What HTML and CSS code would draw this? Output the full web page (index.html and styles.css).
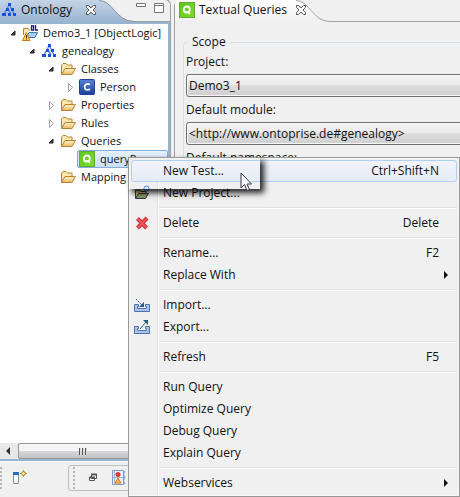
FILE: index.html
```html
<!DOCTYPE html>
<html lang="en">
<head>
<meta charset="utf-8">
<title>Ontology workbench</title>
<link rel="stylesheet" href="styles.css">
</head>
<body>
<svg class="defs" aria-hidden="true">
  <defs>
    <linearGradient id="gold" x1="0" y1="0" x2="0" y2="1"><stop offset="0" stop-color="#fff3cf"/><stop offset="1" stop-color="#e9b75c"/></linearGradient>
    <linearGradient id="green" x1="0" y1="0" x2="1" y2="1"><stop offset="0" stop-color="#5cc51c"/><stop offset="1" stop-color="#7ee02a"/></linearGradient>
    <linearGradient id="blue" x1="0" y1="0" x2="0" y2="1"><stop offset="0" stop-color="#5a82d8"/><stop offset="1" stop-color="#1c3f9c"/></linearGradient>
    <linearGradient id="tabblue" x1="0" y1="0" x2="0" y2="1"><stop offset="0" stop-color="#c4d4e6"/><stop offset="1" stop-color="#99b4d1"/></linearGradient>
    <linearGradient id="tabgrey" x1="0" y1="0" x2="0" y2="1"><stop offset="0" stop-color="#ffffff"/><stop offset="1" stop-color="#f0f0f0"/></linearGradient>
    <symbol id="i-onto" viewBox="0 0 16 16"><path d="M8 3 3 12M7 7l3 5M9 4l4 8" stroke="#5c86e6" stroke-width="1.500" fill="none"/><path d="M7 1h3v3H7zM5 6h3v3H5zM10 6h3v3h-3zM1 11h4v3H1zM7 11h3v3H7zM12 11h3v3h-3z" fill="#1c50d8"/></symbol>
    <symbol id="i-folder" viewBox="0 0 16 16"><path d="M1.500 13V4l1.500-1.500h3L7.500 4H12v3" fill="#fbe5b0" stroke="#b9822f"/><path d="M1.500 13.500 5 7.500h10.500l-3.500 6z" fill="url(#gold)" stroke="#b9822f"/></symbol>
    <symbol id="i-query" viewBox="0 0 16 16"><rect x=".5" y=".5" width="15" height="15" fill="url(#green)" stroke="#62a936"/><circle cx="7.800" cy="7.500" r="3" fill="none" stroke="#fff" stroke-width="1.800"/><path d="m8.500 9.500 2.500 2.500" stroke="#fff" stroke-width="1.500"/></symbol>
    <symbol id="i-class" viewBox="0 0 16 16"><rect x=".5" y=".5" width="15" height="15" rx="1" fill="url(#blue)" stroke="#1e3e91"/><path d="M10.800 5.800A3 3 0 1 0 10.800 10" fill="none" stroke="#fff" stroke-width="1.800"/></symbol>
    <symbol id="i-open" viewBox="0 0 10 10"><path d="M7 3v4H3z" fill="#444" stroke="#222"/></symbol>
    <symbol id="i-shut" viewBox="0 0 10 10"><path d="M3.500 1.500 7.500 5.500l-4 4z" fill="#fff" stroke="#a3a3a3"/></symbol>
    <symbol id="i-close" viewBox="0 0 12 12"><path d="M1.500 1.500h2L6 4l2.500-2.500h2v2L8 6l2.500 2.500v2h-2L6 8l-2.500 2.500h-2v-2L4 6 1.500 3.500z" fill="#fff" stroke="#555"/></symbol>
    <symbol id="i-tray" viewBox="0 0 16 16"><path d="M.5 7.500h4v2h-1v2h9v-2h-1v-2h4v7H.5z" fill="#a9c3ea" stroke="#4f73aa"/></symbol>
  </defs>
</svg>
<div class="workbench">
  <div class="views">
    <section class="ontology">
      <header class="tabs">
        <svg class="tab-shape" width="136" height="22" aria-hidden="true"><path d="M0 0h99c14 0 16 21 35 21v1H0z" fill="url(#tabblue)"/><path d="M99 .5c14 0 17 21 35 21h2" fill="none" stroke="#8d969f"/></svg>
        <div class="tab"><svg class="icon"><use href="#i-onto"/></svg><span class="tab-title">Ontology</span><button class="plain" aria-label="Close Ontology"><svg class="small"><use href="#i-close"/></svg></button></div>
        <div class="tab-tools">
          <button class="plain" aria-label="Minimize"><svg width="10" height="12"><path d="M.5 1.500h9v3h-9z" fill="#fff" stroke="#777"/></svg></button>
          <button class="plain" aria-label="Maximize"><svg width="10" height="12"><path d="M.5 1.500h9v9h-9zM0 3.500h10" fill="#fff" stroke="#777"/></svg></button>
        </div>
      </header>
      <div class="view-body">
        <ul class="tree">
          <li class="l0"><svg class="twist"><use href="#i-open"/></svg><svg class="icon" viewBox="0 0 16 16"><path d="M1.500 10V3.500h5l1 2" fill="#fbe5b0" stroke="#b9822f"/><path d="M4 12.500 7 7.500h8.500l-2.500 5z" fill="#a9cdf3" stroke="#3e7bb8"/><path d="M4.500 7.500 8 15.500H.5z" fill="#ffcf5a" stroke="#c47a16"/><path d="M4.500 10v3M4.500 13.500v1" stroke="#5a3000"/><path d="M9.500 1h2v4h-2zM13.500 0v5H16" fill="none" stroke="#1a1a80" stroke-width="1.300"/></svg><span>Demo3_1 [ObjectLogic]</span></li>
          <li class="l1"><svg class="twist"><use href="#i-open"/></svg><svg class="icon"><use href="#i-onto"/></svg><span>genealogy</span></li>
          <li class="l2"><svg class="twist"><use href="#i-open"/></svg><svg class="icon"><use href="#i-folder"/></svg><span>Classes</span></li>
          <li class="l3"><svg class="twist"><use href="#i-shut"/></svg><svg class="icon"><use href="#i-class"/></svg><span>Person</span></li>
          <li class="l2"><svg class="twist"><use href="#i-shut"/></svg><svg class="icon"><use href="#i-folder"/></svg><span>Properties</span></li>
          <li class="l2"><svg class="twist"><use href="#i-shut"/></svg><svg class="icon"><use href="#i-folder"/></svg><span>Rules</span></li>
          <li class="l2"><svg class="twist"><use href="#i-open"/></svg><svg class="icon"><use href="#i-folder"/></svg><span>Queries</span></li>
          <li class="l3 leaf"><span class="selected"><svg class="icon"><use href="#i-query"/></svg><span>queryP</span></span></li>
          <li class="l2"><svg class="twist"></svg><svg class="icon"><use href="#i-folder"/></svg><span>Mapping</span></li>
        </ul>
        <div class="scrollbar">
          <button class="plain arrow" aria-label="Scroll left"><svg width="6" height="8"><path d="M5 0v8L1 4z" fill="#333"/></svg></button>
          <div class="thumb"><i></i><i></i><i></i></div>
        </div>
      </div>
    </section>
    <section class="queries">
      <header class="tabs">
        <svg class="tab-shape" width="156" height="22" aria-hidden="true"><path d="M0 22V4Q0 0 4 0h117c14 0 16 21 34 21v1z" fill="url(#tabgrey)"/><path d="M121 .5c14 0 16 21 34 21h1" fill="none" stroke="#a0a0a0"/></svg>
        <div class="tab"><svg class="icon"><use href="#i-query"/></svg><span class="tab-title">Textual Queries</span><button class="plain" aria-label="Close Textual Queries"><svg class="small"><use href="#i-close"/></svg></button></div>
      </header>
      <fieldset>
        <legend>Scope</legend>
        <label for="project">Project:</label>
        <select id="project"><option>Demo3_1</option></select>
        <label for="module">Default module:</label>
        <select id="module"><option>&lt;http://www.ontoprise.de#genealogy&gt;</option></select>
        <label for="namespace">Default namespace:</label>
        <select id="namespace"><option></option></select>
      </fieldset>
    </section>
  </div>
  <footer class="status">
    <span class="grip"></span>
    <button class="plain" aria-label="New fast view"><svg width="16" height="16"><path d="M1.500 3.500h5v10h-5z" fill="#fff" stroke="#7b8fa5"/><path d="M1 2h6v3H1z" fill="#286fba"/><path d="m11.500.5 1 2 2 1-2 1-1 2-1-2-2-1 2-1z" fill="#ffe9a0" stroke="#a47b12"/></svg></button>
    <div class="trim">
      <span class="grip"></span>
      <button class="plain" aria-label="Restore"><svg width="10" height="10"><path d="M3.500 1.500h5v4h-5zM1.500 4.500h5v3h-5z" fill="#fff" stroke="#555"/><path d="M3 1.500h6M1 4.500h6" stroke="#555" stroke-width="2"/></svg></button>
      <button class="plain" aria-label="Problems view"><svg width="16" height="16"><path d="M1.500.5h11v14h-11z" fill="#e9eff8" stroke="#7e9cc4"/><path d="M14 1q-3 3 0 6-3 4 0 7" fill="none" stroke="#7e9cc4"/><circle cx="7" cy="4.500" r="2.500" fill="#e2323b"/><path d="m7 8 3 5H4z" fill="#ffc24b" stroke="#d57718"/><path d="M2 7.500h10M3.500 1v13" stroke="#9db4d5"/></svg></button>
    </div>
  </footer>
</div>

<div class="menu" role="menu">
  <button role="menuitem" class="item active"><span class="mi"></span><span class="name">New Test...</span><kbd>Ctrl+Shift+N</kbd></button>
  <button role="menuitem" class="item"><span class="mi"><svg class="icon" viewBox="0 0 16 16"><path d="M1.500 13V5h4l1 1.500H12V9" fill="#e6c56a" stroke="#3b3a2c"/><path d="m1.500 13.500 3-5h10l-3 5z" fill="#8c9b64" stroke="#2d3555"/><circle cx="12.500" cy="3.500" r="2.500" fill="#d9ecff" stroke="#3f87d2"/></svg></span><span class="name">New Project...</span></button>
  <hr>
  <button role="menuitem" class="item"><span class="mi"><svg class="icon" viewBox="0 0 16 16"><path d="m3.500 3.500 9 9.500M13 3 3.500 13" stroke="#c6282e" stroke-width="4"/><path d="m3.500 3.500 9 9.500M13 3 3.500 13" stroke="#f0555a" stroke-width="2.400"/></svg></span><span class="name">Delete</span><kbd>Delete</kbd></button>
  <hr>
  <button role="menuitem" class="item"><span class="mi"></span><span class="name">Rename...</span><kbd>F2</kbd></button>
  <button role="menuitem" class="item"><span class="mi"></span><span class="name">Replace With</span><svg class="sub" viewBox="0 0 4 8"><path d="m0 0 4 4-4 4z"/></svg></button>
  <hr>
  <button role="menuitem" class="item"><span class="mi"><svg class="icon" viewBox="0 0 16 16"><use href="#i-tray"/><path d="m2 2 6 6" stroke="#315f92" stroke-dasharray="2 1"/><path d="M10 5v5H5z" fill="#1b5c94"/></svg></span><span class="name">Import...</span></button>
  <button role="menuitem" class="item"><span class="mi"><svg class="icon" viewBox="0 0 16 16"><use href="#i-tray"/><path d="m6 10 6-7" stroke="#315f92"/><path d="M9 1h5v5z" fill="#1b5c94"/></svg></span><span class="name">Export...</span></button>
  <hr>
  <button role="menuitem" class="item"><span class="mi"></span><span class="name">Refresh</span><kbd>F5</kbd></button>
  <hr>
  <button role="menuitem" class="item"><span class="mi"></span><span class="name">Run Query</span></button>
  <button role="menuitem" class="item"><span class="mi"></span><span class="name">Optimize Query</span></button>
  <button role="menuitem" class="item"><span class="mi"></span><span class="name">Debug Query</span></button>
  <button role="menuitem" class="item"><span class="mi"></span><span class="name">Explain Query</span></button>
  <hr>
  <button role="menuitem" class="item"><span class="mi"></span><span class="name">Webservices</span><svg class="sub" viewBox="0 0 4 8"><path d="m0 0 4 4-4 4z"/></svg></button>
  <div class="callout"></div>
  <svg class="cursor" width="13" height="20" viewBox="0 0 13 20"><path d="M1 1v15l3.500-3.500L7 18.500l2.500-1L7 12h4.500z" fill="#fff" stroke="#33364a"/></svg>
</div>
</body>
</html>
```
FILE: styles.css
```css
* { box-sizing: border-box; }
body {
  margin: 0;
  height: 100vh;
  overflow: hidden;
  position: relative;
  background: #f0f0f0;
  color: #111;
  font: 12px/18px "Open Sans", "Noto Sans", sans-serif;
}
svg { display: block; flex: none; }
button, select { font: inherit; color: inherit; }
.defs { position: absolute; width: 0; height: 0; }
.icon { width: 16px; height: 16px; }
.small { width: 12px; height: 12px; }
.plain { display: block; padding: 0; border: 0; background: none; }

.workbench { height: 100%; display: flex; flex-direction: column; }
.views { flex: 1; min-height: 0; display: grid; grid-template-columns: 171px 1fr; gap: 3px; }
.ontology, .queries { display: flex; flex-direction: column; min-width: 0; }
.ontology { border-right: 1px solid #a0a0a0; border-radius: 0 6px 0 0; border-top: 1px solid #a0a0a0; margin-top: -1px; }
.queries { border-left: 1px solid #a0a0a0; border-radius: 6px 0 0 0; }

.tabs { height: 22px; flex: none; display: flex; justify-content: space-between; position: relative; border-bottom: 1px solid #a0a0a0; }
.tab-shape { position: absolute; left: 0; top: 0; }
.tab { position: relative; display: flex; align-items: center; height: 20px; }
.ontology .tab { padding-left: 1px; gap: 4px; }
.queries .tab { padding-left: 4px; gap: 4px; }
.ontology .tab-title { margin-right: 9px; }
.queries .tab-title { margin-right: 4px; }
.tab-tools { display: flex; gap: 8px; padding: 2px 6px 0 0; align-items: flex-start; }

.view-body { flex: 1; min-height: 0; display: flex; flex-direction: column; background: #fff; border: solid #99b4d1; border-width: 2px 2px 2px 0; }
.tree { flex: 1; min-height: 0; overflow: hidden; margin: 0; padding: 0; list-style: none; white-space: nowrap; font-size: 11px; }
.tree li { display: flex; align-items: center; height: 18px; }
.tree .icon { margin: 0 5px 0 4px; }
.twist { width: 10px; height: 10px; }
.l0 { padding-left: 8px; }
.l1 { padding-left: 27px; }
.l2 { padding-left: 46px; }
.l3 { padding-left: 65px; }
.tree .leaf { padding-left: 77px; }
.selected { flex: 1; display: flex; align-items: center; height: 18px; border: 1px solid #84acdd; border-radius: 2px; background: linear-gradient(#e6f0fc, #c9dffa); }
.tree .selected .icon { margin-left: 1px; }

.scrollbar { display: flex; height: 16px; flex: none; background: #e8e8e8; }
.arrow { width: 18px; padding: 0 5px; }
.thumb { flex: 1; display: flex; gap: 1px; align-items: center; justify-content: center; padding-right: 20px; border: 1px solid #979797; border-radius: 2px; background: linear-gradient(#f5f5f5 48%, #d8d8da 52%, #c2c2c6); }
.thumb i { width: 2px; height: 7px; background: #555; border-right: 1px solid #ddd; }

fieldset { margin: 11px -4px 0 8px; padding: 0 0 0 2px; min-width: 0; border: 1px solid #d5dfe5; border-radius: 4px; display: flex; flex-direction: column; }
legend { margin-left: 2px; padding: 0 4px; }
label { margin: 2px 0 3px; }
select { appearance: none; height: 23px; flex: none; width: 100%; padding: 0 2px; border: 1px solid #707070; border-radius: 3px; background: linear-gradient(#f2f2f2, #ebebeb 48%, #dddddd 50%, #cfcfcf); box-shadow: inset 0 0 0 1px #f8f8f8; margin-bottom: 2px; }

.status { flex: none; height: 36px; display: flex; align-items: center; gap: 10px; border-top: 1px solid #f8f8f8; padding-bottom: 4px; }
.grip { width: 1px; height: 22px; border-left: 2px dotted #b5b5b5; }
.trim { flex: 1; display: flex; align-items: center; gap: 13px; height: 26px; margin-left: 30px; padding-left: 4px; border: 1px solid #bcbcbc; border-radius: 3px; }

.menu { position: absolute; top: 157px; left: 128px; right: 0; padding: 2px; border: 1px solid #979797; background: linear-gradient(90deg, #f0f0f0 28px, #e0e0e0 28px 29px, #fff 29px 30px, #f0f0f0 30px); box-shadow: inset 0 0 0 1px #f6f6f6; }
.item { display: flex; align-items: center; width: 100%; height: 22px; padding: 0 17px 0 0; border: 1px solid transparent; border-radius: 3px; background: none; text-align: left; line-height: 20px; }
.item.active { border-color: #aecff7; background: linear-gradient(#f1f4f9, #e6edf6); }
.mi { width: 31px; padding-left: 2px; flex: none; }
.name { flex: 1; }
kbd { font: inherit; }
.sub { width: 4px; height: 8px; margin-right: -9px; fill: #111; }
.menu hr { height: 2px; margin: 3px 0 3px 28px; border: 0; border-top: 1px solid #e0e0e0; border-bottom: 1px solid #fff; }
.callout { position: absolute; left: -1px; top: -1px; width: 132px; height: 32px; box-shadow: 4px 4px 6px rgba(0, 0, 0, .85); pointer-events: none; }
.cursor { position: absolute; left: 111px; top: 14px; }
```
